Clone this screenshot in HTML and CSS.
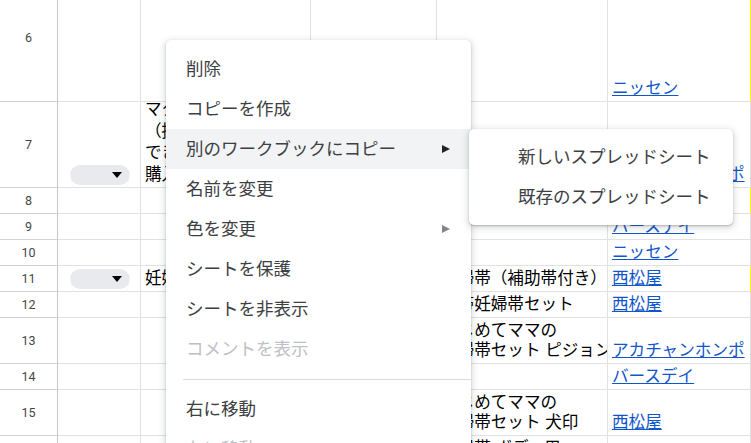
FILE: index.html
```html
<!DOCTYPE html>
<html lang="ja">
<head>
<meta charset="utf-8">
<title>Sheet menu</title>
<link rel="stylesheet" href="styles.css">
</head>
<body>
<div class="sheet">
  <div class="row first h128">
    <div class="hdr">6</div><div class="c"></div><div class="c"></div><div class="c"></div><div class="c"></div>
    <div class="c y"><a href="#">ニッセン</a></div>
  </div>
  <div class="row h86">
    <div class="hdr">7</div>
    <div class="c chipcell"><span class="chip"><span class="tri"></span></span></div>
    <div class="c tall"><span>マタニティガードル</span><span>（授乳期まで使える）</span><span>できるだけ早めに</span><span>購入する</span></div>
    <div class="c"></div>
    <div class="c"><span>産前産後兼用</span></div>
    <div class="c"><a href="#">アカチャンホンポ</a></div>
  </div>
  <div class="row h26">
    <div class="hdr">8</div><div class="c"></div><div class="c"></div><div class="c"></div><div class="c"></div>
    <div class="c y"><a href="#">西松屋</a></div>
  </div>
  <div class="row h26">
    <div class="hdr">9</div><div class="c"></div><div class="c"></div><div class="c"></div><div class="c"></div>
    <div class="c"><a href="#">バースデイ</a></div>
  </div>
  <div class="row h26">
    <div class="hdr">10</div><div class="c"></div><div class="c"></div><div class="c"></div><div class="c"></div>
    <div class="c"><a href="#">ニッセン</a></div>
  </div>
  <div class="row h26">
    <div class="hdr">11</div>
    <div class="c chipcell"><span class="chip"><span class="tri"></span></span></div>
    <div class="c"><span>妊婦帯</span></div>
    <div class="c"></div>
    <div class="c"><span>妊婦帯（補助帯付き）</span></div>
    <div class="c y"><a href="#">西松屋</a></div>
  </div>
  <div class="row h26">
    <div class="hdr">12</div><div class="c"></div><div class="c"></div><div class="c"></div>
    <div class="c"><span>腹帯妊婦帯セット</span></div>
    <div class="c"><a href="#">西松屋</a></div>
  </div>
  <div class="row h46">
    <div class="hdr">13</div><div class="c"></div><div class="c"></div><div class="c"></div>
    <div class="c"><span>はじめてママの</span><span>妊婦帯セット ピジョン</span></div>
    <div class="c"><a href="#">アカチャンホンポ</a></div>
  </div>
  <div class="row h26">
    <div class="hdr">14</div><div class="c"></div><div class="c"></div><div class="c"></div><div class="c"></div>
    <div class="c"><a href="#">バースデイ</a></div>
  </div>
  <div class="row h46">
    <div class="hdr">15</div><div class="c"></div><div class="c"></div><div class="c"></div>
    <div class="c"><span>はじめてママの</span><span>妊婦帯セット 犬印</span></div>
    <div class="c"><a href="#">西松屋</a></div>
  </div>
  <div class="row h46">
    <div class="hdr">16</div><div class="c"></div><div class="c"></div><div class="c"></div>
    <div class="c"><span>妊婦帯 ボディ用</span><span>サポーター</span></div>
    <div class="c"></div>
  </div>

  <div class="menu">
    <div class="mi">削除</div>
    <div class="mi">コピーを作成</div>
    <div class="mi hl">別のワークブックにコピー<span class="arr"></span></div>
    <div class="mi">名前を変更</div>
    <div class="mi">色を変更<span class="arr grey"></span></div>
    <div class="mi">シートを保護</div>
    <div class="mi">シートを非表示</div>
    <div class="mi dis">コメントを表示</div>
    <div class="sep"></div>
    <div class="mi">右に移動</div>
    <div class="mi dis">左に移動</div>
  </div>

  <div class="submenu">
    <div class="si">新しいスプレッドシート</div>
    <div class="si">既存のスプレッドシート</div>
  </div>
</div>
</body>
</html>
```

FILE: styles.css
```css
html, body {
  margin: 0;
  padding: 0;
  background: #fff;
}

.sheet {
  position: relative;
  width: 751px;
  height: 443px;
  overflow: hidden;
  font-family: "Liberation Sans", "Noto Sans CJK JP", sans-serif;
}

.row {
  display: grid;
  grid-template-columns: 58px 83px 170px 126px 171px 143px;
}

.first { margin-top: -26px; }
.h128 { height: 128px; }
.h86 { height: 86px; }
.h26 { height: 26px; }
.h46 { height: 46px; }

.hdr {
  box-sizing: border-box;
  border-right: 1px solid #c4c7c5;
  border-bottom: 1px solid #d3d3d3;
  display: flex;
  align-items: center;
  justify-content: center;
  padding-bottom: 1px;
  font-family: Roboto, "Liberation Sans", sans-serif;
  font-size: 12.5px;
  color: #444746;
}

.c {
  box-sizing: border-box;
  border-right: 1px solid #e1e1e1;
  border-bottom: 1px solid #e1e1e1;
  display: flex;
  flex-direction: column;
  justify-content: flex-end;
  padding: 0 3px 2px 4px;
  overflow: hidden;
  font-size: 16.6px;
  line-height: 20px;
  color: #000;
  white-space: nowrap;
}

.c.tall { line-height: 21.5px; }

.c.y { border-right-color: #ffff00; }

.c a {
  color: #1155cc;
  text-decoration: underline;
}

.chipcell {
  align-items: center;
}

.chip {
  display: flex;
  align-items: center;
  justify-content: flex-end;
  box-sizing: border-box;
  width: 60px;
  height: 20px;
  border-radius: 10px;
  background: #e8eaed;
  padding-right: 8px;
}

.tri {
  width: 0;
  height: 0;
  border-left: 5px solid transparent;
  border-right: 5px solid transparent;
  border-top: 6px solid #000;
}

.menu {
  position: absolute;
  left: 166px;
  top: 40px;
  width: 305px;
  padding: 9px 0;
  background: #fff;
  border-radius: 5px;
  box-shadow: 0 2px 6px 2px rgba(60, 64, 67, 0.15), 0 1px 2px 0 rgba(60, 64, 67, 0.3);
  font-family: "Noto Sans CJK JP", sans-serif;
}

.mi {
  box-sizing: border-box;
  height: 40px;
  display: flex;
  align-items: center;
  padding: 0 21px 4px 20px;
  font-size: 17.5px;
  color: #3c4043;
  white-space: nowrap;
}

.mi.hl { background: #f1f3f4; }
.mi.dis { color: #bdc1c6; }

.arr {
  margin-left: auto;
  margin-top: 4px;
  width: 0;
  height: 0;
  border-top: 4.5px solid transparent;
  border-bottom: 4.5px solid transparent;
  border-left: 8px solid #202124;
}

.arr.grey { border-left-color: #80868b; }

.sep {
  height: 1px;
  background: #dadce0;
  margin: 10px 0 9px 17px;
}

.submenu {
  position: absolute;
  left: 469px;
  top: 129px;
  width: 264px;
  padding: 8px 0;
  background: #fff;
  border-radius: 5px;
  box-shadow: 0 2px 6px 2px rgba(60, 64, 67, 0.15), 0 1px 2px 0 rgba(60, 64, 67, 0.3);
  font-family: "Noto Sans CJK JP", sans-serif;
}

.si {
  box-sizing: border-box;
  height: 40px;
  display: flex;
  align-items: center;
  padding: 0 0 4px 49px;
  font-size: 17.5px;
  color: #3c4043;
  white-space: nowrap;
}
```
